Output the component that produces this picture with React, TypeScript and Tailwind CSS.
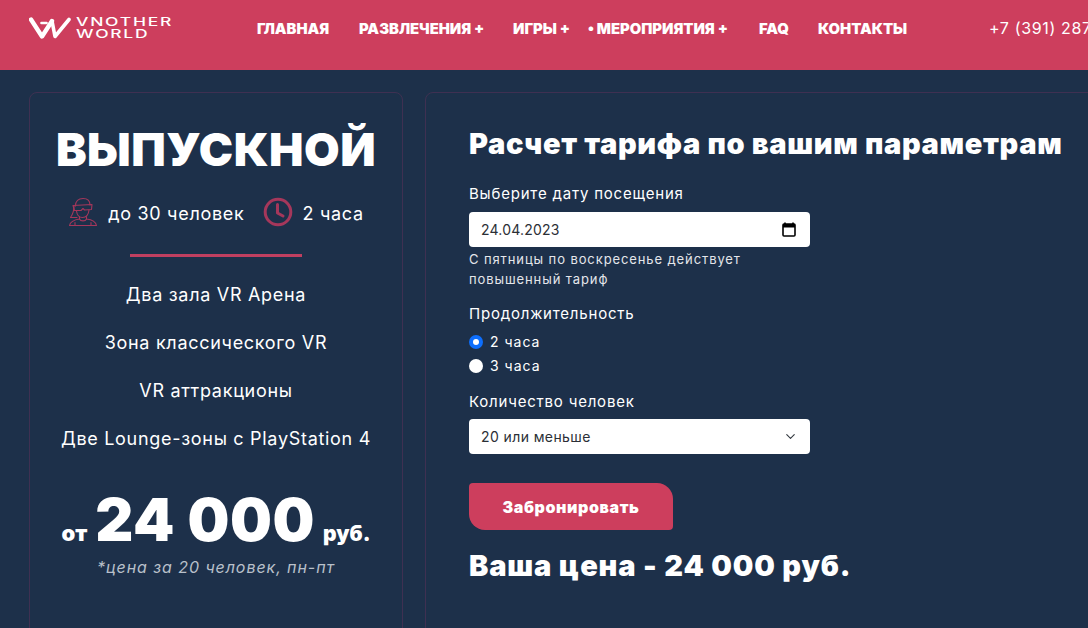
import { ChevronDown } from 'lucide-react'

const NAV = [
  { label: 'ГЛАВНАЯ', width: 'w-[102px]' },
  { label: 'РАЗВЛЕЧЕНИЯ +', width: 'w-[154px]' },
  { label: 'ИГРЫ +', width: 'w-[75px]' },
  { label: '• МЕРОПРИЯТИЯ +', width: 'w-[171px]' },
  { label: 'FAQ', width: 'w-[59px]' },
  { label: 'КОНТАКТЫ', width: 'w-[171px]' },
]

const FEATURES = ['Два зала VR Арена', 'Зона классического VR', 'VR аттракционы', 'Две Lounge-зоны с PlayStation 4']

const heavy = "font-['Inter',sans-serif] font-black"
const label = 'block text-[15px] leading-[20px] tracking-[0.8px]'

function Logo() {
  return (
    <div className="flex items-center gap-[5px] w-[228px] h-[24px] shrink-0 text-white">
      <svg width="42" height="22" viewBox="0 0 42 22" fill="none" stroke="white" strokeWidth="4" strokeLinejoin="round" strokeLinecap="round">
        <path d="M2 2.5 L13 19.5 L23 4" strokeWidth="4.4" />
        <path d="M23 4 L26 19.5 L40 2.5" strokeWidth="3.6" />
        <path d="M12.5 6 L17.5 6" strokeWidth="2.6" />
      </svg>
      <div className="font-['Inter',sans-serif] font-medium text-[11.5px] leading-[12px] tracking-[0.1em] scale-x-[1.52] origin-left">
        <div>VNOTHER</div>
        <div>WORLD</div>
      </div>
    </div>
  )
}

function VrPerson() {
  return (
    <svg width="30" height="30" viewBox="0 0 30 30" fill="none" stroke="#a5375b" strokeWidth="1.1" strokeLinejoin="round" strokeLinecap="round">
      <path d="M7.5 9 C7.5 4 10.5 1.5 15 1.5 C19.5 1.5 22 4 22 8" />
      <path d="M5 8.5 L24 7.5 L23.5 12.5 L16.5 13 L15 11.5 L13 13.5 L6.5 13.5 Z" />
      <path d="M8.5 14 C9 18 11 20.5 14.5 20.5 C18 20.5 20.5 18 21 13" />
      <path d="M6 9 C6 14 5 17 2.5 20.5 L9 20.5" />
      <path d="M11.5 20 L11.5 22 C8 22.5 2.5 23.5 1.5 28.5 L28.5 28.5 C27.5 24 22.5 22.5 18.5 22 L18.5 19.5" />
      <path d="M11.5 22 C12.5 24.5 17.5 24.5 18.5 22" />
      <path d="M7 25.5 L7 28.5 M23 25.5 L23 28.5" />
    </svg>
  )
}

function Clock() {
  return (
    <svg width="30" height="30" viewBox="0 0 30 30" fill="none" stroke="#a5375b" strokeWidth="3" strokeLinecap="round" strokeLinejoin="round">
      <circle cx="15" cy="15" r="12.8" />
      <path d="M14.5 7.5 L14.5 16 L20 19" />
    </svg>
  )
}

// native date-input glyph: outlined box with a heavy top bar
function DateGlyph() {
  return (
    <svg width="14" height="15" viewBox="0 0 14 15" fill="none" className="text-black">
      <path d="M3 0.5 V3 M11 0.5 V3" stroke="currentColor" strokeWidth="1.6" />
      <rect x="1" y="2" width="12" height="12" rx="1" stroke="currentColor" strokeWidth="1.6" />
      <rect x="1" y="2" width="12" height="3.5" fill="currentColor" />
    </svg>
  )
}

function PriceCard() {
  return (
    <section className="w-[374px] h-[560px] shrink-0 rounded-lg border border-[#3f3052] flex flex-col items-center text-white">
      <h1 className={`${heavy} text-[46px] leading-[52px] mt-[30px] tracking-[0.01em]`}>ВЫПУСКНОЙ</h1>
      <div className="flex items-center mt-[21px] h-[32px] text-[18px] tracking-[0.7px]">
        <VrPerson />
        <span className="ml-[10px] pt-[3px]">до 30 человек</span>
        <span className="ml-[19px]"><Clock /></span>
        <span className="ml-[9px] pt-[3px]">2 часа</span>
      </div>
      <div className="w-[172px] h-[3px] bg-[#c03f60] mt-[26px]" />
      <ul className="mt-[25px] flex flex-col items-center gap-[22px] text-[18px] leading-[26px] tracking-[0.7px]">
        {FEATURES.map((f) => (
          <li key={f}>{f}</li>
        ))}
      </ul>
      <div className={`${heavy} flex items-baseline mt-[33px]`}>
        <span className="text-[22px]">от</span>
        <span className="text-[59px] leading-[70px] mx-[8px] tracking-[0.01em]">24 000</span>
        <span className="text-[21px]">руб.</span>
      </div>
      <p className="italic text-[16px] leading-[24px] tracking-[0.93px] text-[#b9c0ca]">*цена за 20 человек, пн-пт</p>
    </section>
  )
}

function TariffForm() {
  return (
    <section className="w-[700px] h-[560px] shrink-0 rounded-lg border border-[#3f3052] pl-[43px] text-white">
      <h2 className={`${heavy} text-[29px] leading-[36px] tracking-[0.65px] mt-[33px] whitespace-nowrap`}>Расчет тарифа по вашим параметрам</h2>
      <label className={`${label} mt-[22px]`}>Выберите дату посещения</label>
      <div className="w-[341px] h-[35px] mt-[8px] bg-white rounded flex items-center justify-between pl-[12px] pr-[14px] text-[14px] tracking-[0.2px] text-[#2b2f36]">
        <span>24.04.2023</span>
        <DateGlyph />
      </div>
      <p className="text-[13px] leading-[20px] tracking-[0.9px] text-[#e4e6ea] mt-[2px] w-[330px]">С пятницы по воскресенье действует повышенный тариф</p>
      <label className={`${label} mt-[15px]`}>Продолжительность</label>
      <div className="mt-[11px] flex flex-col gap-[10px] text-[14px] leading-[14px] tracking-[1px]">
        <div className="flex items-center gap-[7px]">
          <span className="w-[14px] h-[14px] rounded-full bg-[#0d6efd] flex items-center justify-center">
            <span className="w-[6px] h-[6px] rounded-full bg-white" />
          </span>
          2 часа
        </div>
        <div className="flex items-center gap-[7px]">
          <span className="w-[14px] h-[14px] rounded-full bg-white" />
          3 часа
        </div>
      </div>
      <label className={`${label} mt-[19px]`}>Количество человек</label>
      <div className="w-[341px] h-[35px] mt-[7px] bg-white rounded flex items-center justify-between pl-[12px] pr-[12px] text-[14px] tracking-[0.4px] text-[#2b2f36]">
        <span>20 или меньше</span>
        <ChevronDown size={15} strokeWidth={1.8} className="text-[#343a40]" />
      </div>
      <button className="w-[204px] h-[47px] mt-[29px] flex items-center justify-center bg-[#cd3e5d] rounded-tl-[4px] rounded-tr-[16px] rounded-bl-[16px] rounded-br-[4px] text-[16px] tracking-[0.6px] font-['Inter',sans-serif] font-black">
        Забронировать
      </button>
      <p className={`${heavy} text-[29px] leading-[36px] tracking-[0.85px] mt-[18px] whitespace-nowrap`}>Ваша цена - 24 000 руб.</p>
    </section>
  )
}

export default function App() {
  return (
    <div className="w-[1088px] h-[628px] overflow-hidden bg-[#1d304a] font-['Inter',sans-serif]">
      <header className="h-[70px] bg-[#cd3e5d] flex pl-[29px] pt-[16px] text-white whitespace-nowrap">
        <Logo />
        <nav className="flex h-[24px] mt-[1px] shrink-0 items-center text-[14.8px] font-['Inter',sans-serif] font-black">
          {NAV.map((item) => (
            <a key={item.label} className={`block shrink-0 ${item.width}`}>{item.label}</a>
          ))}
        </nav>
        <span className="h-[24px] shrink-0 flex items-center text-[16px] tracking-[0.04em]">+7 (391) 287</span>
      </header>
      <main className="flex gap-[22px] pl-[29px] pt-[22px]">
        <PriceCard />
        <TariffForm />
      </main>
    </div>
  )
}
